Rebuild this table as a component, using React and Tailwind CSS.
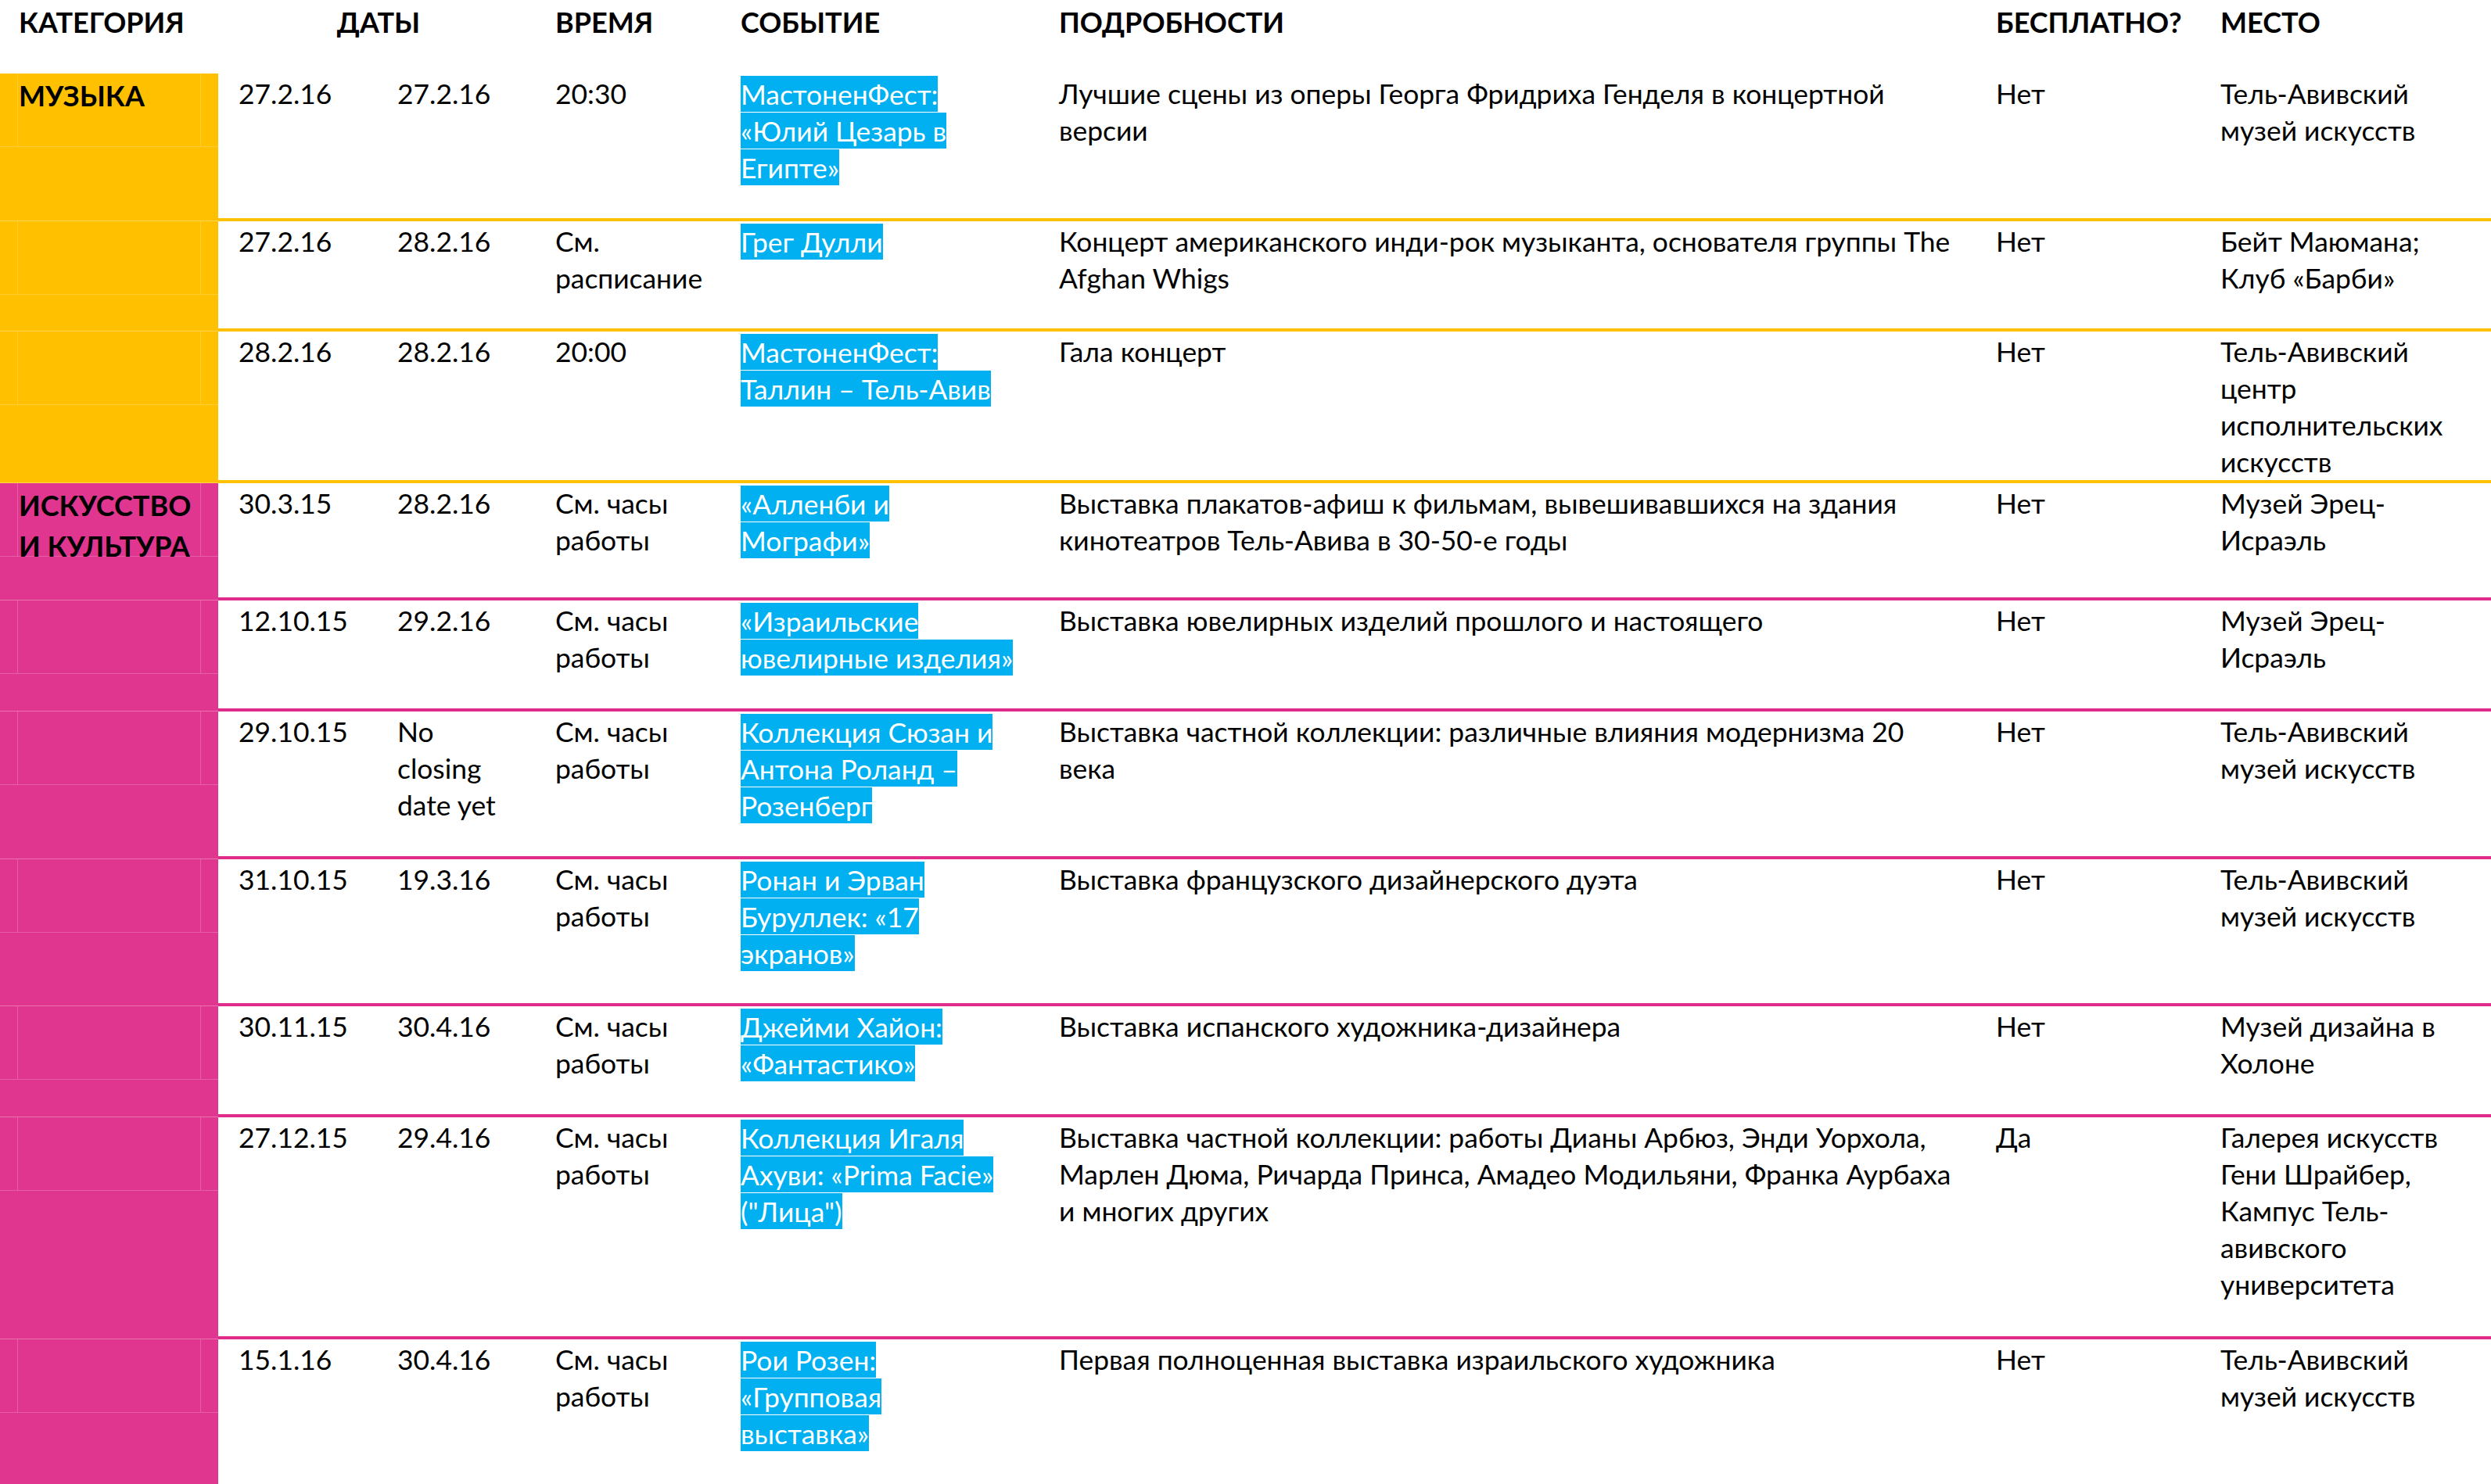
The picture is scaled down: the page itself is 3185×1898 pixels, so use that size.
import React from 'react';

const YELLOW = 'music';

const rows = [
  {
    cat: YELLOW, label: ['МУЗЫКА'], h: 'h-[189px]',
    from: '27.2.16', to: ['27.2.16'], time: ['20:30'],
    event: ['МастоненФест:', '«Юлий Цезарь в', 'Египте»'],
    details: ['Лучшие сцены из оперы Георга Фридриха Генделя в концертной', 'версии'],
    free: 'Нет', place: ['Тель-Авивский', 'музей искусств'],
  },
  {
    cat: YELLOW, label: [], h: 'h-[141px]',
    from: '27.2.16', to: ['28.2.16'], time: ['См.', 'расписание'],
    event: ['Грег Дулли'],
    details: ['Концерт американского инди-рок музыканта, основателя группы The', 'Afghan Whigs'],
    free: 'Нет', place: ['Бейт Маюмана;', 'Клуб «Барби»'],
  },
  {
    cat: YELLOW, label: [], h: 'h-[194px]',
    from: '28.2.16', to: ['28.2.16'], time: ['20:00'],
    event: ['МастоненФест:', 'Таллин – Тель-Авив'],
    details: ['Гала концерт'],
    free: 'Нет', place: ['Тель-Авивский', 'центр', 'исполнительских', 'искусств'],
  },
  {
    cat: 'art', label: ['ИСКУССТВО', 'И КУЛЬТУРА'], h: 'h-[150px]',
    from: '30.3.15', to: ['28.2.16'], time: ['См. часы', 'работы'],
    event: ['«Алленби и', 'Мографи»'],
    details: ['Выставка плакатов-афиш к фильмам, вывешивавшихся на здания', 'кинотеатров Тель-Авива в 30-50-е годы'],
    free: 'Нет', place: ['Музей Эрец-', 'Исраэль'],
  },
  {
    cat: 'art', label: [], h: 'h-[142px]',
    from: '12.10.15', to: ['29.2.16'], time: ['См. часы', 'работы'],
    event: ['«Израильские', 'ювелирные изделия»'],
    details: ['Выставка ювелирных изделий прошлого и настоящего'],
    free: 'Нет', place: ['Музей Эрец-', 'Исраэль'],
  },
  {
    cat: 'art', label: [], h: 'h-[189px]',
    from: '29.10.15', to: ['No', 'closing', 'date yet'], time: ['См. часы', 'работы'],
    event: ['Коллекция Сюзан и', 'Антона Роланд –', 'Розенберг'],
    details: ['Выставка частной коллекции: различные влияния модернизма 20', 'века'],
    free: 'Нет', place: ['Тель-Авивский', 'музей искусств'],
  },
  {
    cat: 'art', label: [], h: 'h-[188px]',
    from: '31.10.15', to: ['19.3.16'], time: ['См. часы', 'работы'],
    event: ['Ронан и Эрван', 'Буруллек: «17', 'экранов»'],
    details: ['Выставка французского дизайнерского дуэта'],
    free: 'Нет', place: ['Тель-Авивский', 'музей искусств'],
  },
  {
    cat: 'art', label: [], h: 'h-[142px]',
    from: '30.11.15', to: ['30.4.16'], time: ['См. часы', 'работы'],
    event: ['Джейми Хайон:', '«Фантастико»'],
    details: ['Выставка испанского художника-дизайнера'],
    free: 'Нет', place: ['Музей дизайна в', 'Холоне'],
  },
  {
    cat: 'art', label: [], h: 'h-[284px]',
    from: '27.12.15', to: ['29.4.16'], time: ['См. часы', 'работы'],
    event: ['Коллекция Игаля', 'Ахуви: «Prima Facie»', '("Лица")'],
    details: [
      'Выставка частной коллекции: работы Дианы Арбюз, Энди Уорхола,',
      'Марлен Дюма, Ричарда Принса, Амадео Модильяни, Франка Аурбаха',
      'и многих других',
    ],
    free: 'Да', place: ['Галерея искусств', 'Гени Шрайбер,', 'Кампус Тель-', 'авивского', 'университета'],
  },
  {
    cat: 'art', label: [], h: 'h-[240px]',
    from: '15.1.16', to: ['30.4.16'], time: ['См. часы', 'работы'],
    event: ['Рои Розен:', '«Групповая', 'выставка»'],
    details: ['Первая полноценная выставка израильского художника'],
    free: 'Нет', place: ['Тель-Авивский', 'музей искусств'],
  },
];

const Lines = ({ lines }) =>
  lines.map((l, i) => (
    <div key={i} className="whitespace-nowrap">
      {l}
    </div>
  ));

const Row = ({ row }) => {
  const music = row.cat === YELLOW;
  return (
    <div className={`flex shrink-0 ${row.h}`}>
      <div
        className={`w-[279px] shrink-0 border-b border-white/30 ${
          music ? 'bg-[#FFC000]' : 'bg-[#E0368F]'
        }`}
      >
        <div className="h-[94px] border-b border-white/20">
          <div className="mx-[22px] h-full border-x border-white/20 pl-[1px] pt-[2px] text-[36px] font-bold leading-[52px]">
            <Lines lines={row.label} />
          </div>
        </div>
      </div>
      <div
        className={`grid flex-1 grid-cols-[206px_204px_239px_406px_1193px_292px_366px] border-b-4 pt-[2px] text-[35.4px] leading-[47px] ${
          music ? 'border-[#FFC000]' : 'border-[#DF2C8A]'
        }`}
      >
        <div className="pl-[26px]">{row.from}</div>
        <div className="pl-[23px]">
          <Lines lines={row.to} />
        </div>
        <div className="pl-[21px]">
          <Lines lines={row.time} />
        </div>
        <div className="pl-[19px]">
          {row.event.map((l, i) => (
            <React.Fragment key={i}>
              <span className="whitespace-nowrap bg-[#00B0F0] py-[1.5px] text-white">{l}</span>
              <br />
            </React.Fragment>
          ))}
        </div>
        <div className="pl-[20px]">
          <Lines lines={row.details} />
        </div>
        <div className="pl-[25px]">{row.free}</div>
        <div className="pl-[20px]">
          <Lines lines={row.place} />
        </div>
      </div>
    </div>
  );
};

export default function App() {
  return (
    <div className="flex h-[1898px] flex-col overflow-hidden bg-white font-['Lato','Liberation_Sans',sans-serif] text-black">
      <div className="grid h-[94px] shrink-0 grid-cols-[279px_410px_239px_406px_1193px_292px_366px] pt-[2px] text-[36px] font-bold leading-[52px]">
        <div className="pl-[24px]">КАТЕГОРИЯ</div>
        <div className="text-center">ДАТЫ</div>
        <div className="pl-[21px]">ВРЕМЯ</div>
        <div className="pl-[19px]">СОБЫТИЕ</div>
        <div className="pl-[20px]">ПОДРОБНОСТИ</div>
        <div className="pl-[25px]">БЕСПЛАТНО?</div>
        <div className="pl-[20px]">МЕСТО</div>
      </div>
      {rows.map((r, i) => (
        <Row key={i} row={r} />
      ))}
    </div>
  );
}
